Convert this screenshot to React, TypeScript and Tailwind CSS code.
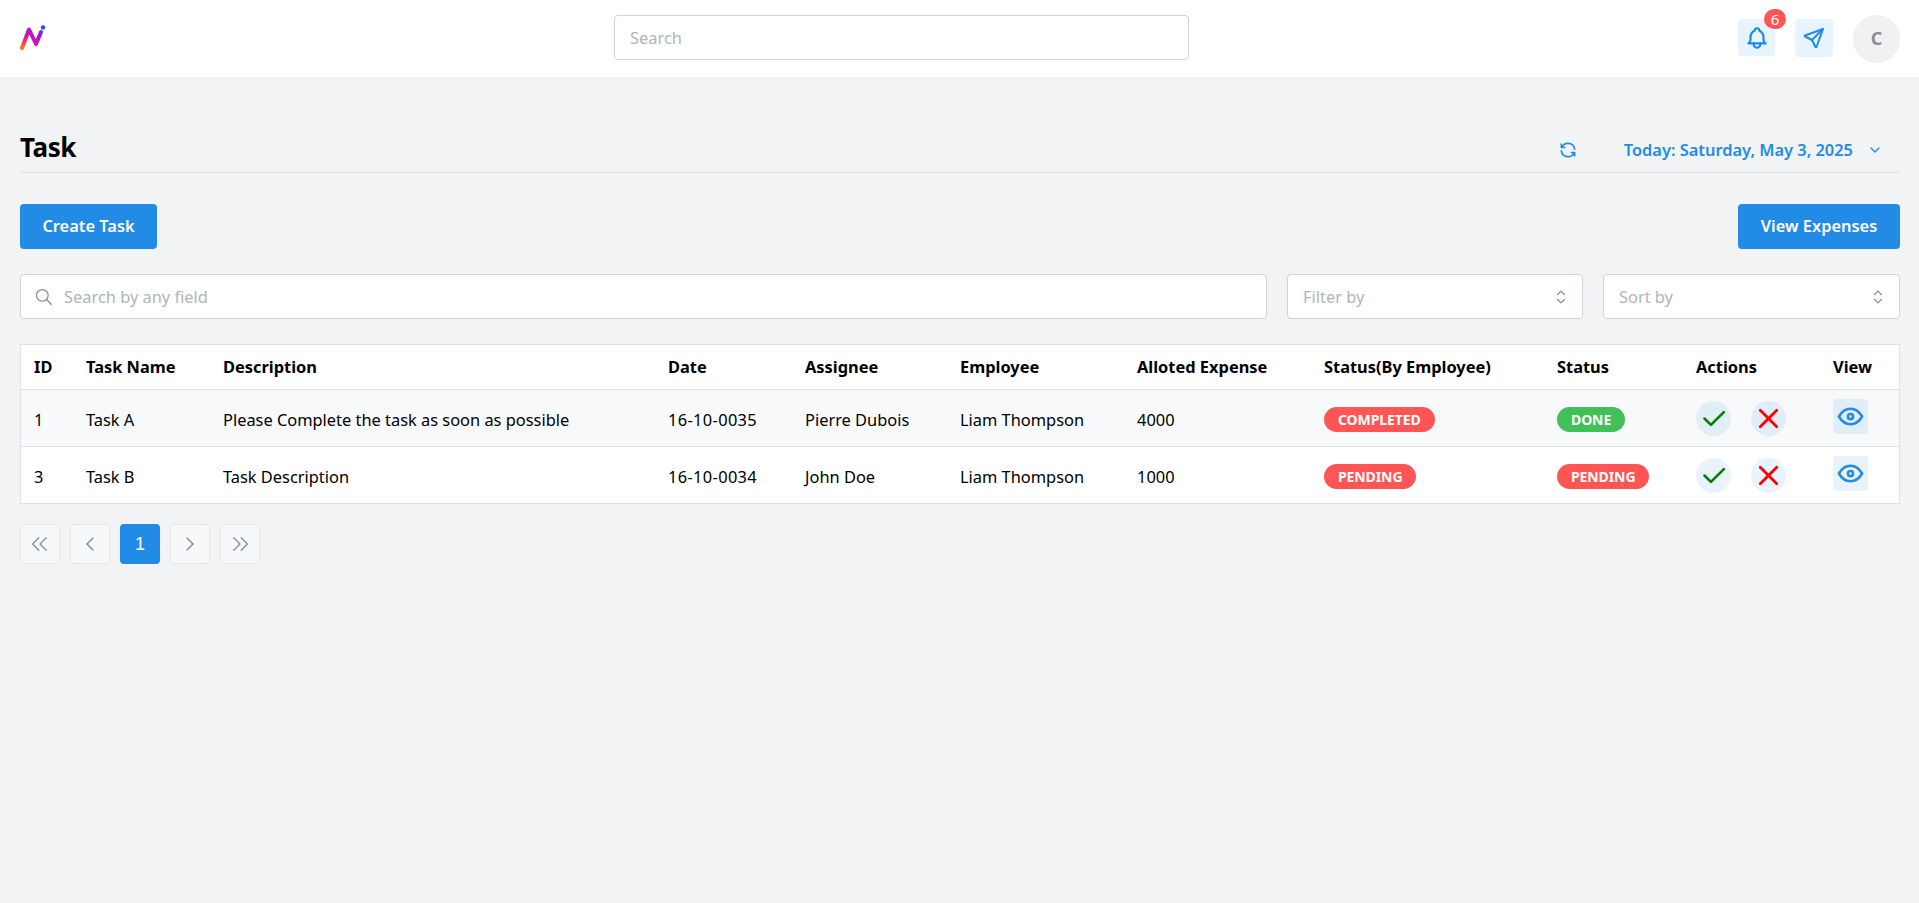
import { TbBell, TbSend, TbRefresh, TbChevronDown, TbSearch, TbSelector, TbCheck, TbX, TbEye, TbChevronsLeft, TbChevronsRight, TbChevronLeft, TbChevronRight } from "react-icons/tb";

const font = { fontFamily: '"Noto Sans", "Open Sans", sans-serif' };

const Logo = () => (
  <svg width="30" height="30" viewBox="0 0 30 30" className="block">
    <defs>
      <linearGradient id="lg" x1="2" y1="24" x2="24" y2="3" gradientUnits="userSpaceOnUse">
        <stop offset="0" stopColor="#ff7a00" />
        <stop offset="0.3" stopColor="#f0148c" />
        <stop offset="0.7" stopColor="#a010e8" />
        <stop offset="1" stopColor="#2a4df5" />
      </linearGradient>
    </defs>
    <path d="M2 24 L9 5.5 L16 20 L21 8" fill="none" stroke="url(#lg)" strokeWidth="4" strokeLinecap="round" strokeLinejoin="round" />
    <circle cx="23" cy="3.5" r="2.2" fill="#1f50f5" />
  </svg>
);

const Badge = ({ c, t }: { c: "r" | "g"; t: string }) => (
  <span className={`inline-flex items-center justify-center h-[25px] rounded-full px-[14px] text-[14px] font-bold tracking-[-0.1px] text-white ${c === "r" ? "bg-[#ff5555]" : "bg-[#40c057]"}`}>{t}</span>
);

const rows = [
  { id: "1", name: "Task A", d: "Please Complete the task as soon as possible", date: "16-10-0035", a: "Pierre Dubois", e: "Liam Thompson", x: "4000", s1: "COMPLETED", s2: "DONE", s2c: "g" as const, alt: true, h: "h-[57px]" },
  { id: "3", name: "Task B", d: "Task Description", date: "16-10-0034", a: "John Doe", e: "Liam Thompson", x: "1000", s1: "PENDING", s2: "PENDING", s2c: "r" as const, alt: false, h: "h-[56px]" },
];

const heads = ["ID", "Task Name", "Description", "Date", "Assignee", "Employee", "Alloted Expense", "Status(By Employee)", "Status", "Actions", "View"];
const widths = [52, 137, 445, 137, 155, 177, 187, 233, 139, 137, 79];

const PageBtn = ({ children }: { children: React.ReactNode }) => (
  <div className="w-10 h-10 flex items-center justify-center rounded-[4px] border border-[#e3e6ea] bg-[#f7f8f9] text-[#868e96]">{children}</div>
);

export default function App() {
  return (
    <div style={font} className="min-h-[903px] bg-[#f1f3f5] text-black text-[16.4px]">
      <header className="h-[77px] bg-white flex items-center justify-between pl-[20px] pr-[19px] relative">
        <Logo />
        <div className="absolute left-[614px] top-[15px] w-[575px] h-[45px] rounded-[4px] border border-[#ced4da] bg-white flex items-center pl-[15px] pt-[2px] text-[#adb5bd]">Search</div>
        <div className="flex items-center">
          <div className="relative w-[37px] h-[37px] rounded-[4px] bg-[#e7f3fd] flex items-center justify-center text-[#228be6] -mt-[2px]">
            <TbBell size={26} />
            <span className="absolute -top-[10px] -right-[11px] w-[22px] h-[20px] rounded-full bg-[#ff5555] text-white text-[15px] flex items-center justify-center font-normal">6</span>
          </div>
          <div className="ml-[20px] w-[38px] h-[38px] rounded-[4px] bg-[#e7f3fd] flex items-center justify-center text-[#228be6] -mt-[1px]">
            <TbSend size={24} />
          </div>
          <div className="ml-[20px] w-[47px] h-[48px] rounded-full bg-[#f1f1f1] flex items-center justify-center text-[#868e96] font-bold text-[18px]">C</div>
        </div>
      </header>

      <main className="pl-[20px] pr-[19px]">
        <div className="h-[96px] border-b border-[#dee2e6] flex items-end justify-between pb-[7px]">
          <h1 className="text-[26px] font-bold leading-[36px] tracking-[-0.4px]">Task</h1>
          <div className="flex items-center text-[#228be6] font-semibold leading-[24px] mb-[3px]">
            <TbRefresh size={20} />
            <span className="ml-[46px]">Today: Saturday, May 3, 2025</span>
            <TbChevronDown size={16} className="ml-[14px] mr-[17px]" />
          </div>
        </div>

        <div className="mt-[31px] flex justify-between">
          <button className="h-[45px] w-[137px] rounded-[4px] bg-[#228be6] text-white font-semibold">Create Task</button>
          <button className="h-[45px] w-[162px] rounded-[4px] bg-[#228be6] text-white font-semibold">View Expenses</button>
        </div>

        <div className="mt-[25px] flex gap-[20px]">
          <div className="w-[1247px] h-[45px] rounded-[4px] border border-[#ced4da] bg-white flex items-center pl-[13px] text-[#adb5bd]">
            <TbSearch size={20} strokeWidth={1.5} className="text-[#868e96]" />
            <span className="ml-[10px] pt-[2px]">Search by any field</span>
          </div>
          <div className="w-[296px] h-[45px] rounded-[4px] border border-[#ced4da] bg-white flex items-center justify-between pl-[15px] pr-[11px] text-[#adb5bd]">
            <span className="pt-[2px]">Filter by</span>
            <TbSelector size={20} strokeWidth={1.5} className="text-[#868e96]" />
          </div>
          <div className="w-[297px] h-[45px] rounded-[4px] border border-[#ced4da] bg-white flex items-center justify-between pl-[15px] pr-[11px] text-[#adb5bd]">
            <span className="pt-[2px]">Sort by</span>
            <TbSelector size={20} strokeWidth={1.5} className="text-[#868e96]" />
          </div>
        </div>

        <div className="mt-[25px] border border-[#dee2e6] bg-white">
          <table className="w-full table-fixed border-separate border-spacing-0 text-left">
            <colgroup>
              {widths.map((w, i) => <col key={i} style={{ width: w }} />)}
            </colgroup>
            <thead>
              <tr className="h-[45px]">
                {heads.map((h) => (
                  <th key={h} className="pl-[13px] font-bold border-b border-[#dee2e6] whitespace-nowrap">{h}</th>
                ))}
              </tr>
            </thead>
            <tbody>
              {rows.map((r, i) => (
                <tr key={r.id} className={`${r.h} ${r.alt ? "bg-[#f8f9fa]" : "bg-white"}`}>
                  {[r.id, r.name, r.d, r.date, r.a, r.e, r.x].map((v, j) => (
                    <td key={j} className={`pl-[13px] pt-[4px] whitespace-nowrap ${j === 3 ? "tracking-[0.35px]" : ""} ${i === 0 ? "border-b border-[#dee2e6]" : ""}`}>{v}</td>
                  ))}
                  <td className={`pl-[13px] pt-[3px] ${i === 0 ? "border-b border-[#dee2e6]" : ""}`}><Badge c="r" t={r.s1} /></td>
                  <td className={`pl-[13px] pt-[3px] ${i === 0 ? "border-b border-[#dee2e6]" : ""}`}><Badge c={r.s2c} t={r.s2} /></td>
                  <td className={`pl-[13px] ${i === 0 ? "border-b border-[#dee2e6]" : ""}`}>
                    <div className="flex gap-[20px]">
                      <span className="w-[35px] h-[35px] rounded-full bg-[#228be6]/10 flex items-center justify-center"><TbCheck size={31} color="#008000" /></span>
                      <span className="w-[35px] h-[35px] rounded-full bg-[#228be6]/10 flex items-center justify-center"><TbX size={33} color="#ff0000" /></span>
                    </div>
                  </td>
                  <td className={`pl-[13px] ${i === 0 ? "border-b border-[#dee2e6]" : ""}`}>
                    <span className="w-[35px] h-[35px] mb-[4px] rounded-[4px] bg-[#228be6]/10 flex items-center justify-center"><TbEye size={31} color="#228be6" /></span>
                  </td>
                </tr>
              ))}
            </tbody>
          </table>
        </div>

        <div className="mt-[20px] flex gap-[10px]">
          <PageBtn><TbChevronsLeft size={30} strokeWidth={1.1} /></PageBtn>
          <PageBtn><TbChevronLeft size={24} strokeWidth={1.5} /></PageBtn>
          <div className="w-10 h-10 rounded-[4px] bg-[#228be6] text-white text-[18px] flex items-center justify-center" style={{ fontFamily: '"Liberation Sans", sans-serif' }}>1</div>
          <PageBtn><TbChevronRight size={24} strokeWidth={1.5} /></PageBtn>
          <PageBtn><TbChevronsRight size={30} strokeWidth={1.1} /></PageBtn>
        </div>
      </main>
    </div>
  );
}
